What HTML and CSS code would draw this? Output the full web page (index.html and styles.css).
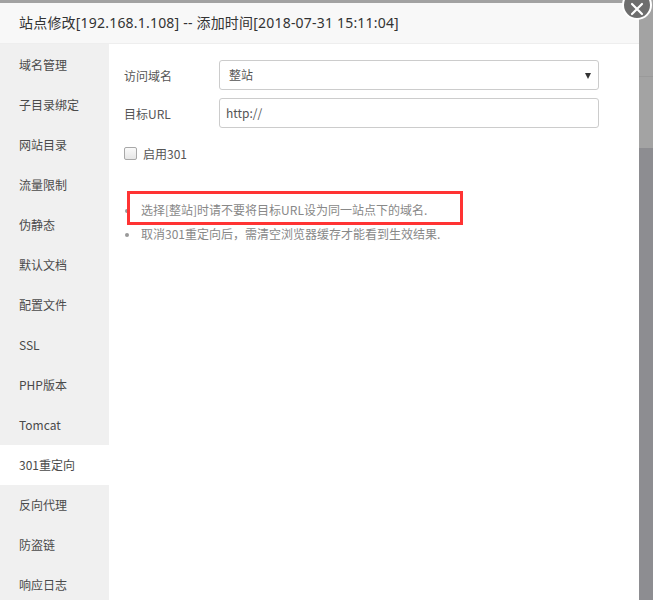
FILE: index.html
```html
<!DOCTYPE html>
<html lang="zh-CN">
<head>
<meta charset="utf-8">
<title>站点修改</title>
<link rel="stylesheet" href="styles.css">
</head>
<body>
<div class="page">
  <div class="dialog">
    <div class="dlg-header">站点修改[192.168.1.108] -- 添加时间[2018-07-31 15:11:04]</div>
    <div class="dlg-body">
      <ul class="side">
        <li>域名管理</li>
        <li>子目录绑定</li>
        <li>网站目录</li>
        <li>流量限制</li>
        <li>伪静态</li>
        <li>默认文档</li>
        <li>配置文件</li>
        <li>SSL</li>
        <li>PHP版本</li>
        <li>Tomcat</li>
        <li class="active">301重定向</li>
        <li>反向代理</li>
        <li>防盗链</li>
        <li>响应日志</li>
      </ul>
      <div class="main">
        <div class="row">
          <span class="label">访问域名</span>
          <div class="field select"><span>整站</span><i class="arrow"></i></div>
        </div>
        <div class="row">
          <span class="label">目标URL</span>
          <div class="field input"><span>http://</span></div>
        </div>
        <div class="check-row">
          <span class="checkbox"></span>
          <span class="check-label">启用301</span>
        </div>
        <ul class="tips">
          <li class="hl">选择[整站]时请不要将目标URL设为同一站点下的域名.</li>
          <li>取消301重定向后，需清空浏览器缓存才能看到生效结果.</li>
        </ul>
      </div>
    </div>
  </div>
  <div class="backdrop"></div>
  <div class="close"><svg width="14" height="14" viewBox="0 0 14 14"><path d="M2 2L12 12M12 2L2 12" stroke="#fff" stroke-width="2.2" stroke-linecap="round"/></svg></div>
</div>
</body>
</html>
```

FILE: styles.css
```css
html, body {
  margin: 0;
  padding: 0;
}
body {
  background: #a2a2a2;
  font-family: "Noto Sans CJK SC", "Noto Sans", sans-serif;
  font-size: 12px;
  color: #444;
  overflow: hidden;
}
.page {
  position: relative;
  display: flex;
  width: 653px;
  height: 600px;
}
.dialog {
  width: 639px;
  margin-top: 3px;
  background: #fff;
  display: flex;
  flex-direction: column;
  flex-shrink: 0;
}
.dlg-header {
  height: 40px;
  line-height: 40px;
  padding-left: 19px;
  background: #f8f8f8;
  border-bottom: 1px solid #eee;
  font-family: "Noto Sans", "Noto Sans CJK SC", sans-serif;
  font-size: 14px;
  letter-spacing: 0.2px;
  color: #333;
}
.dlg-body {
  display: flex;
  flex: 1;
}
.side {
  list-style: none;
  margin: 0;
  padding: 1px 0 0;
  width: 109px;
  background: #f0f0f0;
}
.side li {
  height: 40px;
  line-height: 40px;
  padding-left: 19px;
  color: #4a4a4a;
}
.side li.active {
  background: #fff;
}
.main {
  flex: 1;
  padding: 16px 40px 0 15px;
}
.row {
  display: flex;
  align-items: center;
  margin-bottom: 8px;
}
.label {
  width: 95px;
  color: #555;
}
.field {
  position: relative;
  width: 378px;
  height: 28px;
  border: 1px solid #ccc;
  border-radius: 3px;
  line-height: 28px;
  color: #555;
  box-sizing: content-box;
}
.select span {
  padding-left: 9px;
}
.input span {
  padding-left: 6px;
}
.arrow {
  position: absolute;
  right: 7px;
  top: 12px;
  width: 0;
  height: 0;
  border-left: 3.5px solid transparent;
  border-right: 3.5px solid transparent;
  border-top: 6px solid #333;
}
.check-row {
  display: flex;
  align-items: center;
  margin-top: 16px;
  height: 18px;
}
.checkbox {
  width: 11px;
  height: 11px;
  border: 1px solid #a8a8a8;
  border-radius: 2px;
  background: linear-gradient(#fafafa, #e6e6e6);
  margin-right: 6px;
}
.check-label {
  color: #555;
}
.tips {
  list-style: none;
  margin: 36px 0 0;
  padding: 0;
  color: #888;
}
.tips li {
  position: relative;
  height: 24px;
  line-height: 24px;
  padding-left: 17px;
}
.tips li::before {
  content: "";
  position: absolute;
  left: 1px;
  top: 11px;
  width: 4px;
  height: 4px;
  border-radius: 50%;
  background: #999;
}
.tips li.hl::after {
  content: "";
  position: absolute;
  left: 3px;
  top: -7px;
  width: 330px;
  height: 28px;
  border: 3px solid #f33;
}
.backdrop {
  flex: 1;
  background: linear-gradient(#a3a3a3 0, #a3a3a3 76px, #9a9a9a 76px, #9a9a9a 77px, #a3a3a3 77px, #a3a3a3 148px, #8d8d91 148px);
}
.close {
  position: absolute;
  left: 622px;
  top: -10px;
  width: 26px;
  height: 18px;
  padding-top: 8px;
  border: 2px solid #fff;
  border-radius: 50%;
  background: #6e6e6e;
  display: flex;
  align-items: center;
  justify-content: center;
  box-sizing: content-box;
}
```
